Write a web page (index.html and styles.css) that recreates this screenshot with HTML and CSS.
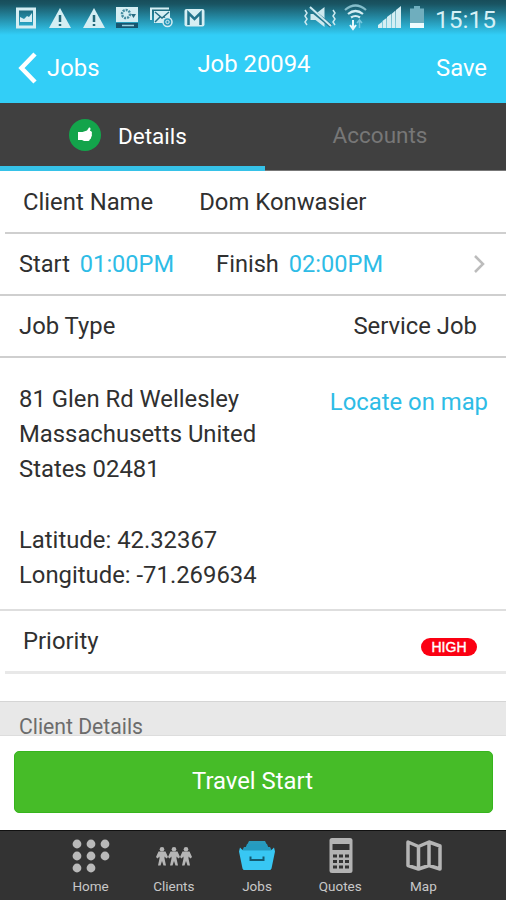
FILE: index.html
```html
<!DOCTYPE html>
<html lang="en">

<head>
    <meta charset="UTF-8">
    <title>Job 20094</title>
    <link rel="stylesheet" href="styles.css">
</head>

<body>
    <div class="app">
        <div class="top">
            <div class="status-bar">
                <svg class="status-left" width="210" height="36" viewBox="0 0 210 36">
                    <path d="M17.5 9h17v18h-17z" fill="none" stroke="#d5eef3" stroke-width="3" />
                    <path d="M20 22v-5l4 2 3-3 2 1 3-4v9z" fill="#d5eef3" />
                    <path d="M60 8l11 20H49z" fill="#d5eef3" />
                    <path d="M60 15v7m0 2v2" stroke="#226879" stroke-width="2.5" />
                    <path d="M94 8l11 20H83z" fill="#d5eef3" />
                    <path d="M94 15v7m0 2v2" stroke="#226879" stroke-width="2.5" />
                    <path d="M116 7h22v15h-22z" fill="#d5eef3" />
                    <circle cx="126" cy="14" r="4" fill="none" stroke="#438ba0" stroke-width="2.5" stroke-dasharray="2 1" />
                    <path d="M131 14h5l-2.500 4z" fill="#286c82" />
                    <path d="M116 23h22v5h-22z" fill="#17556f" />
                    <path d="M122 25.500h12" stroke="#9bd3e2" stroke-width="1.500" />
                    <path d="M151 20V8.500h18" fill="none" stroke="#d5eef3" stroke-width="2" />
                    <path d="M154 11h16v12h-16z" fill="#d5eef3" />
                    <path d="M155 12l7 6 7-6M155 22l5-5M169 22l-5-5" fill="none" stroke="#226f86" stroke-width="1.500" />
                    <circle cx="167.500" cy="22" r="4.500" fill="#2b9abb" stroke="#d5eef3" stroke-width="1.500" />
                    <circle cx="167.500" cy="22" r="1.700" fill="none" stroke="#d5eef3" />
                    <rect x="184.500" y="9" width="20" height="17.500" rx="2" fill="#d5eef3" />
                    <path d="M188.500 25V13l6 6 6-6v12" fill="none" stroke="#23748c" stroke-width="2.500" />
                </svg>
                <svg class="status-right" width="126" height="36" viewBox="303 0 126 36">
                    <path d="M310.500 14h5l9-7v20l-9-7h-5z" fill="#cde9ef" />
                    <path d="M309 8l22 18" stroke="#24778e" stroke-width="4" />
                    <path d="M310 7l21 19" stroke="#cde9ef" stroke-width="2" />
                    <path d="M305 10l2 3-2 3 2 3-2 3 2 3M333 10l2 3-2 3 2 3-2 3 2 3" fill="none" stroke="#cde9ef" stroke-width="1.500" />
                    <path d="M345 10q10.500-9 21 0" fill="none" stroke="#84bdca" stroke-width="2.200" />
                    <path d="M348 14q7.500-6 15 0M351 17.500q4.500-3 9 0" fill="none" stroke="#d5eef3" stroke-width="2.200" />
                    <path d="M353 20v8M350 25l3 4 3-4" fill="none" stroke="#e6f8fc" stroke-width="2" />
                    <path d="M359.500 28v-7M357 23l2.500-3 2.500 3" fill="none" stroke="#76c8df" stroke-width="1.500" />
                    <path d="M378 28v-3l4-3v6zM382.500 28v-7l4-3v10zM387 28V17l4-3v14zM391.500 28V14l4-3.500V28zM396 28V10l5-4v22z" fill="#d5eef3" />
                    <path d="M410 8.500h4V6h6v2.500h4V23h-14z" fill="#6faebe" />
                    <path d="M410 23h14v5h-14z" fill="#eefbfe" />
                </svg>
                <span class="clock">15:15</span>
            </div>
            <div class="nav-bar">
                <div class="back">
                    <svg width="19" height="32" viewBox="0 0 19 32">
                        <path d="M17 2L3.500 16 17 30" fill="none" stroke="white" stroke-width="4.500" />
                    </svg>
                    <span>Jobs</span>
                </div>
                <div class="title">Job 20094</div>
                <div class="save">Save</div>
            </div>
        </div>

        <div class="tabs">
            <div class="tab tab-active">
                <svg width="32" height="32" viewBox="0 0 32 32">
                    <circle cx="16" cy="16" r="16" fill="#13a44b" />
                    <path d="M9 13h4.500l4.500-1.500 2-3c1.500-.5 2 1 1 3.500h1q1.500 1 .8 3 .5 1.500-.5 3-.3 2-1.500 2.500-.5 1.500-1.500 1.500H15l-2-1H9z" fill="white" />
                </svg>
                <span>Details</span>
            </div>
            <div class="tab">Accounts</div>
        </div>

        <div class="content">
            <div class="row row-inset">
                <span>Client Name</span>
                <span class="client-name">Dom Konwasier</span>
            </div>
            <div class="row row-time">
                <span>Start</span>
                <span class="time">01:00PM</span>
                <span class="finish">Finish</span>
                <span class="time">02:00PM</span>
                <svg class="chevron" width="12" height="18" viewBox="0 0 12 18">
                    <path d="M2 1l8 8-8 8" fill="none" stroke="#bcbcbc" stroke-width="2.500" />
                </svg>
            </div>
            <div class="row">
                <span>Job Type</span>
                <span class="job-value">Service Job</span>
            </div>
            <div class="address">
                <div>
                    <div>81 Glen Rd Wellesley</div>
                    <div>Massachusetts United</div>
                    <div>States 02481</div>
                    <br>
                    <div>Latitude: 42.32367</div>
                    <div>Longitude: -71.269634</div>
                </div>
                <div class="locate">Locate on map</div>
            </div>
            <div class="row row-inset row-priority">
                <span>Priority</span>
                <span class="badge">HIGH</span>
            </div>
            <div class="section-title">Client Details</div>
        </div>

        <div class="action">
            <button class="travel-button">Travel Start</button>
        </div>

        <div class="bottom-bar">
            <div class="item">
                <svg width="40" height="36" viewBox="0 0 40 36">
                    <g fill="#b9b9b9">
                        <circle cx="6" cy="6" r="4.400" />
                        <circle cx="20" cy="6" r="4.400" />
                        <circle cx="34" cy="6" r="4.400" />
                        <circle cx="6" cy="18" r="4.400" />
                        <circle cx="20" cy="18" r="4.400" />
                        <circle cx="34" cy="18" r="4.400" />
                        <circle cx="6" cy="30" r="4.400" />
                        <circle cx="20" cy="30" r="4.400" />
                    </g>
                </svg>
                <span>Home</span>
            </div>
            <div class="item">
                <svg width="40" height="36" viewBox="0 0 40 36">
                    <defs>
                        <g id="person">
                            <circle cx="6" cy="2.200" r="2.300" />
                            <path d="M2.500 4.500h7l2.500 5.500-1.500 1.500-2-2v2l1.500 7H7.500L6 14l-1.500 4.500H2l1.500-7v-2l-2 2L0 10z" />
                        </g>
                    </defs>
                    <g fill="#b5b5b5">
                        <use href="#person" x="2" y="9" />
                        <use href="#person" x="14" y="9" />
                        <use href="#person" x="26" y="9" />
                    </g>
                </svg>
                <span>Clients</span>
            </div>
            <div class="item">
                <svg width="40" height="36" viewBox="0 0 40 36">
                    <path d="M12 3h16l2 4H10z" fill="#2a9bbd" />
                    <path d="M10 6h20l2 5H8z" fill="#249bc0" />
                    <path d="M7 9h26l2 4H5z" fill="#249bc0" />
                    <path d="M3 9.500l3 3h28l3-3 1 4-3.500 17q-.5 1.500-2 1.500h-25q-1.500 0-2-1.500L2 13.500z" fill="#38c7f3" />
                    <path d="M13.500 18.500v3.500h13v-3.500" fill="none" stroke="#155a70" stroke-width="2" />
                </svg>
                <span>Jobs</span>
            </div>
            <div class="item">
                <svg width="40" height="36" viewBox="0 0 40 36">
                    <rect x="9.500" y="0" width="23" height="35" rx="2.500" fill="#b3b3b3" />
                    <path d="M12.500 6h17v6h-17z" fill="#333" />
                    <path d="M13 18h4m2 0h4m2 0h4M13 23.500h4m2 0h4m2 0h4M13 29h4m2 0h4m2 0h4" stroke="#333" stroke-width="3.200" />
                </svg>
                <span>Quotes</span>
            </div>
            <div class="item">
                <svg width="40" height="36" viewBox="0 0 40 36">
                    <path d="M5 4l10.500 4.500L26 4l11 4v23l-11-3.500L15.500 31 5 27.500zM15.500 8.500V31M26 4v24" fill="none" stroke="#b5b5b5" stroke-width="3.500" stroke-linejoin="round" />
                </svg>
                <span>Map</span>
            </div>
        </div>
    </div>
</body>

</html>
```

FILE: styles.css
```css
body {
    font-family: Roboto, "Liberation Sans", sans-serif;
    margin: 0;
    background-color: white;
    color: #303030;
    font-size: 23.85px;
}

.app {
    display: flex;
    flex-direction: column;
    height: 900px;
    overflow: hidden;
}

svg {
    display: block;
    flex-shrink: 0;
}

.top {
    height: 103px;
    flex-shrink: 0;
    background: linear-gradient(#174d5a 0, #195462 4px, #32cef7 35px);
    color: white;
}

.status-bar {
    display: flex;
    height: 36px;
}

.status-right {
    margin-left: 93px;
}

.clock {
    margin-left: 6px;
    padding-top: 5px;
    line-height: 30px;
    font-size: 24.5px;
    color: #d5f0f6;
}

.nav-bar {
    display: grid;
    grid-template-columns: 1fr 1fr 1fr;
    height: 67px;
    line-height: 28px;
}

.back {
    display: flex;
    padding: 16px 0 0 18px;
    gap: 10px;
}

.back span {
    padding-top: 2px;
}

.title {
    padding: 14px 0 0 2px;
    text-align: center;
}

.save {
    padding: 18px 19px 0 0;
    text-align: right;
}

.tabs {
    display: flex;
    height: 68px;
    flex-shrink: 0;
    background-color: #404040;
    box-sizing: border-box;
    font-size: 22.5px;
}

.tab {
    flex: 1;
    box-sizing: border-box;
    padding-right: 11px;
    border-bottom: 1px solid #777;
    line-height: 64px;
    text-align: center;
    color: #777;
}

.tab-active {
    display: flex;
    align-items: center;
    flex: 0 0 265px;
    padding-left: 69px;
    gap: 17px;
    border-bottom: 5px solid #36c2e8;
    color: white;
}

.tab-active span {
    padding-top: 2px;
}

.content {
    height: 564px;
    flex-shrink: 0;
    overflow: hidden;
}

.row {
    display: flex;
    align-items: center;
    height: 62px;
    box-sizing: border-box;
    padding: 0 29px 0 19px;
    border-bottom: 2px solid #cfcfcf;
}

.row-inset {
    height: 63px;
    margin-left: 5px;
    padding-left: 18px;
}

.row-time {
    font-size: 23.6px;
}

.client-name {
    margin-left: 46px;
}

.time {
    margin-left: 10px;
    color: #2ebce6;
}

.finish {
    margin-left: 42px;
}

.chevron {
    margin-left: auto;
    margin-right: -8px;
}

.job-value {
    margin-left: auto;
}

.address {
    display: flex;
    justify-content: space-between;
    height: 253px;
    box-sizing: border-box;
    padding: 24px 18px 0 19px;
    border-bottom: 2px solid #dedede;
    line-height: 35.2px;
}

.locate {
    padding-top: 3px;
    color: #2ebce6;
}

.row-priority {
    justify-content: space-between;
    border-bottom-width: 3px;
    border-bottom-color: #e8e8e8;
}

.badge {
    width: 56px;
    height: 18px;
    margin-top: 12px;
    border-radius: 9px;
    background-color: #fb0012;
    color: white;
    font: 14px/19px "Liberation Sans", sans-serif;
    -webkit-text-stroke: 0.4px white;
    text-align: center;
}

.section-title {
    height: 35px;
    box-sizing: border-box;
    margin-top: 27px;
    padding-left: 19px;
    border-top: 1px solid #d5d5d5;
    background-color: #e8e8e8;
    color: #6c6c6c;
    font-size: 21.2px;
    line-height: 50px;
}

.action {
    height: 95px;
    flex-shrink: 0;
    box-sizing: border-box;
    border-top: 1px solid #ddd;
    padding: 15px 13px 0 14px;
}

.travel-button {
    display: block;
    width: 100%;
    height: 62px;
    border: 1px solid #36b51d;
    border-radius: 5px;
    background-color: #46bc28;
    color: white;
    font-family: inherit;
    font-size: 23.85px;
    padding: 0 2px 2px 0;
}

.bottom-bar {
    display: flex;
    height: 70px;
    flex-shrink: 0;
    box-sizing: border-box;
    border-top: 1px solid #111;
    padding: 7px 41px 0 49px;
    background-color: #333;
}

.item {
    display: flex;
    flex: 1;
    flex-direction: column;
    align-items: center;
    color: #c8c8c8;
    font-size: 13.5px;
    line-height: 24px;
}
```
